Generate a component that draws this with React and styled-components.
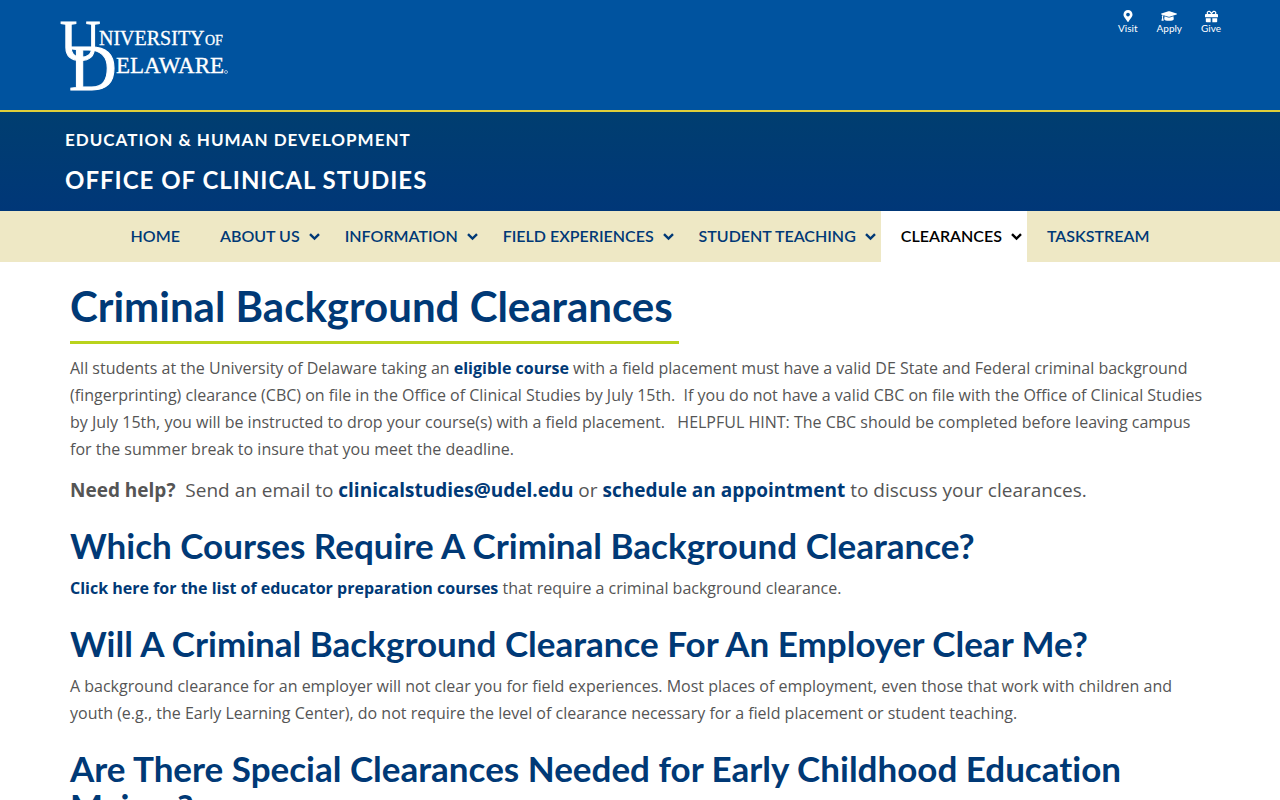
import React from 'react'
import styled, { createGlobalStyle } from 'styled-components'
import { FaMapMarkerAlt, FaGraduationCap, FaGift } from 'react-icons/fa'

const GlobalStyle = createGlobalStyle`
  * {
    box-sizing: border-box;
  }

  body {
    margin: 0;
    background: #fff;
    color: #555;
    font-family: 'Open Sans', sans-serif;
    font-size: 16px;
    line-height: 27px;
  }

  a {
    color: #003976;
    text-decoration: none;
  }
`

const TopBar = styled.header`
  display: flex;
  justify-content: space-between;
  align-items: flex-start;
  height: 112px;
  padding: 10px 59px 0 60px;
  background: #00539f;
  border-bottom: 2px solid #e0cf3a;
`

const LogoLink = styled.a`
  display: block;
  margin-top: 6px;

  svg {
    display: block;
    overflow: visible;
  }
`

const QuickLinks = styled.nav`
  display: flex;
  gap: 19px;
`

const QuickLink = styled.a`
  display: flex;
  flex-direction: column;
  align-items: center;
  color: #fff;
  font: 10px/13px Lato, sans-serif;
`

const QuickIcon = styled.span`
  display: flex;
  font-size: ${({ $size }) => $size}px;
  height: 12px;
  align-items: center;
`

const TitleBand = styled.div`
  padding: 16px 65px 15px;
  background: linear-gradient(#003e70, #003778);
  color: #fff;
  font-family: Lato, sans-serif;
  font-weight: 700;
  letter-spacing: 1px;
  text-transform: uppercase;
`

const College = styled.a`
  display: block;
  color: #fff;
  font-size: 17px;
  line-height: 24px;
`

const Office = styled.a`
  display: block;
  margin-top: 12px;
  color: #fff;
  font-size: 24px;
  line-height: 32px;
`

const MainNav = styled.nav`
  background: #eee8c5;
`

const NavList = styled.ul`
  display: flex;
  justify-content: center;
  margin: 0;
  padding: 0;
  list-style: none;
`

const NavLink = styled.a`
  display: flex;
  align-items: center;
  gap: 9px;
  height: 51px;
  padding: 0 ${({ $menu }) => ($menu ? 5 : 20)}px 2px 20px;
  background: ${({ $active }) => ($active ? '#fff' : 'transparent')};
  color: ${({ $active }) => ($active ? '#000' : '#003976')};
  font: 600 16px/20px Lato, sans-serif;
  text-transform: uppercase;
  white-space: nowrap;
`

const Content = styled.main`
  max-width: 1170px;
  margin: 0 auto;
  padding: 19px 15px;

  p {
    margin: 0 0 14px;
  }

  a {
    font-weight: 700;
  }
`

const PageTitle = styled.h1`
  width: fit-content;
  margin: 0 0 11px;
  padding: 0 6px 10px 0;
  border-bottom: 3px solid #b9d31c;
  color: #003976;
  font: 700 42px/50px Lato, sans-serif;
  font-variant-ligatures: none;
`

const SectionTitle = styled.h2`
  margin: 22px 0 11px;
  color: #003976;
  font: 700 35px/38px Lato, sans-serif;
  font-variant-ligatures: none;
`

const Help = styled.p`
  font-size: 19px;
`

const quickLinks = [
  { label: 'Visit', icon: FaMapMarkerAlt, size: 12 },
  { label: 'Apply', icon: FaGraduationCap, size: 16 },
  { label: 'Give', icon: FaGift, size: 13 }
]

const navItems = [
  { label: 'Home' },
  { label: 'About Us', menu: true },
  { label: 'Information', menu: true },
  { label: 'Field Experiences', menu: true },
  { label: 'Student Teaching', menu: true },
  { label: 'Clearances', menu: true, active: true },
  { label: 'Taskstream' }
]

const Logo = () => (
  <svg
    width="170"
    height="78"
    viewBox="0 0 170 78"
    fill="#fff"
    fontFamily="'Liberation Serif', serif"
    role="img"
    aria-label="University of Delaware"
  >
    <g stroke="#fff" strokeWidth="1">
      <text x="0" y="44" fontSize="56">U</text>
      <text x="9" y="74" fontSize="66">D</text>
    </g>
    <g stroke="#fff" strokeWidth="0.3">
      <text x="39" y="29" fontSize="20">NIVERSITY</text>
      <text x="145" y="29" fontSize="14">OF</text>
      <text x="56" y="57" fontSize="23">ELAWARE</text>
    </g>
    <circle cx="166" cy="56" r="1.5" fill="none" stroke="#fff" strokeWidth="0.6" />
  </svg>
)

const Chevron = () => (
  <svg width="11" height="11" viewBox="0 0 11 11" fill="none" stroke="currentColor" strokeWidth="2.4" aria-hidden="true">
    <path d="M1 4.2 5.5 8.6 10 4.2" />
  </svg>
)

const App = () => (
  <>
    <GlobalStyle />
    <TopBar>
      <LogoLink href="#home">
        <Logo />
      </LogoLink>
      <QuickLinks>
        {quickLinks.map(({ label, icon: Icon, size }) => (
          <QuickLink key={label} href={`#${label.toLowerCase()}`}>
            <QuickIcon $size={size}>
              <Icon />
            </QuickIcon>
            {label}
          </QuickLink>
        ))}
      </QuickLinks>
    </TopBar>
    <TitleBand>
      <College href="#college">Education &amp; Human Development</College>
      <Office href="#office">Office of Clinical Studies</Office>
    </TitleBand>
    <MainNav>
      <NavList>
        {navItems.map(({ label, menu, active }) => (
          <li key={label}>
            <NavLink href="#nav" $menu={menu} $active={active}>
              {label}
              {menu && <Chevron />}
            </NavLink>
          </li>
        ))}
      </NavList>
    </MainNav>
    <Content>
      <PageTitle>Criminal Background Clearances</PageTitle>
      <p>
        All students at the University of Delaware taking an <a href="#courses">eligible course</a> with
        a field placement must have a valid DE State and Federal criminal background (fingerprinting)
        clearance (CBC) on file in the Office of Clinical Studies by July 15th.&nbsp; If you do not have
        a valid CBC on file with the Office of Clinical Studies by July 15th, you will be instructed to
        drop your course(s) with a field placement.&nbsp;&nbsp; HELPFUL HINT: The CBC should be completed
        before leaving campus for the summer break to insure that you meet the deadline.
      </p>
      <Help>
        <strong>Need help?</strong>&nbsp; Send an email to{' '}
        <a href="mailto:clinicalstudies@udel.edu">clinicalstudies@udel.edu</a> or{' '}
        <a href="#appointment">schedule an appointment</a> to discuss your clearances.
      </Help>
      <SectionTitle>Which Courses Require A Criminal Background Clearance?</SectionTitle>
      <p>
        <a href="#list">Click here for the list of educator preparation courses</a> that require a
        criminal background clearance.
      </p>
      <SectionTitle>Will A Criminal Background Clearance For An Employer Clear Me?</SectionTitle>
      <p>
        A background clearance for an employer will not clear you for field experiences. Most places of
        employment, even those that work with children and youth (e.g., the Early Learning Center), do
        not require the level of clearance necessary for a field placement or student teaching.
      </p>
      <SectionTitle>
        Are There Special Clearances Needed for Early Childhood Education Majors?
      </SectionTitle>
    </Content>
  </>
)

export default App
